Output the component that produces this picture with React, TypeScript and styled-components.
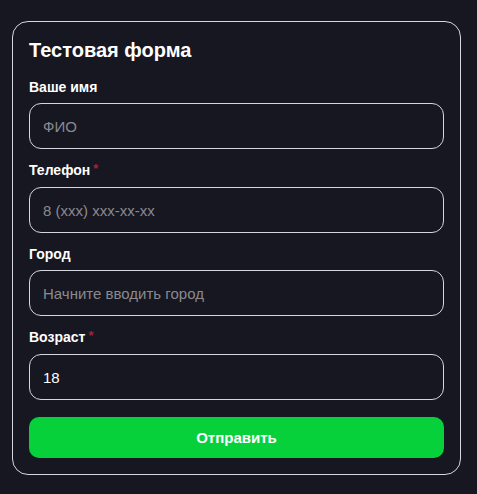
import React from 'react'
import styled, { createGlobalStyle } from 'styled-components'

const GlobalStyle = createGlobalStyle`
    * {
        box-sizing: border-box;
    }
    body {
        margin: 0;
        background: #171721;
        font-family: "Liberation Sans", Arial, sans-serif;
        color: #ffffff;
    }
`

type FieldProps = {
    label: string
    required?: boolean
    placeholder?: string
    value?: string
}

const Field = ({ label, required, placeholder, value }: FieldProps) => (
    <FieldGroup>
        <Label>
            {label}
            {required && <Required>*</Required>}
        </Label>
        <Input placeholder={placeholder} defaultValue={value} />
    </FieldGroup>
)

export default function App() {
    return (
        <>
            <GlobalStyle />
            <Page>
                <FormCard onSubmit={(e) => e.preventDefault()}>
                    <Title>Тестовая форма</Title>
                    <Field label="Ваше имя" placeholder="ФИО" />
                    <Field label="Телефон" required placeholder="8 (xxx) xxx-xx-xx" />
                    <Field label="Город" placeholder="Начните вводить город" />
                    <Field label="Возраст" required value="18" />
                    <SubmitButton type="submit">Отправить</SubmitButton>
                </FormCard>
            </Page>
        </>
    )
}

const Page = styled.div`
    padding: 21px 16px 19px 12px;
`

const FormCard = styled.form`
    width: 449px;
    border: 1px solid #d6d6de;
    border-radius: 16px;
    padding: 16px;
    display: flex;
    flex-direction: column;
`

const Title = styled.h1`
    margin: 0 0 16px;
    font-size: 20px;
    line-height: 25px;
    font-weight: bold;
`

const FieldGroup = styled.div`
    display: flex;
    flex-direction: column;
    gap: 8px;
    margin-bottom: 13px;

    &:last-of-type {
        margin-bottom: 17px;
    }
`

const Label = styled.label`
    font-size: 14px;
    line-height: 16px;
    font-weight: bold;
`

const Required = styled.span`
    color: #a3233a;
    margin-left: 3px;
    font-size: 13px;
    position: relative;
    top: -2px;
`

const Input = styled.input`
    height: 46px;
    width: 100%;
    border: 1px solid #d6d6de;
    border-radius: 12px;
    background: transparent;
    padding: 0 13px;
    font-family: inherit;
    font-size: 15px;
    color: #ffffff;
    outline: none;

    &::placeholder {
        color: #8a8a90;
    }
`

const SubmitButton = styled.button`
    height: 41px;
    border: none;
    border-radius: 10px;
    background: #07d13a;
    color: #ffffff;
    font-family: inherit;
    font-size: 15px;
    font-weight: bold;
    cursor: pointer;
`
